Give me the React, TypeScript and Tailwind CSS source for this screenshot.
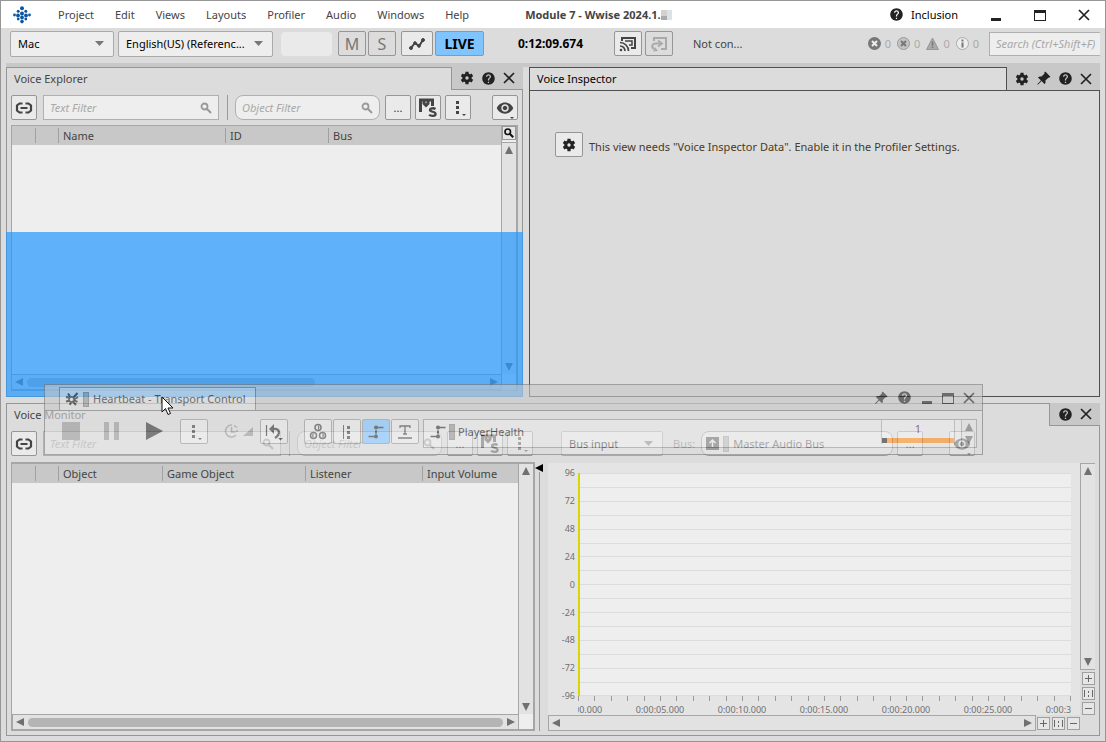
import type { ReactNode } from "react";
import clsx from "clsx";
import { BsPinAngleFill } from "react-icons/bs";
import { MdHelp, MdVisibility } from "react-icons/md";

const MENUS = ["Project", "Edit", "Views", "Layouts", "Profiler", "Audio", "Windows", "Help"];

/* ---------- icons ---------- */

function Logo() {
  const dots = [
    [9, 2.2, 2], [5.2, 5.2, 1.5], [12.8, 5.2, 1.5], [1.5, 9, 1.4], [5, 9.4, 1.9], [9, 7.5, 2],
    [13, 9.4, 1.9], [16.5, 9, 1.4], [5.2, 13, 1.4], [9, 11.5, 1.9], [12.8, 13, 1.4], [9, 15.6, 1.8],
  ];
  return (
    <svg width="18" height="18" viewBox="0 0 18 18" fill="#0b57a0">
      {dots.map(([x, y, r], i) => <circle key={i} cx={x} cy={y} r={r} />)}
    </svg>
  );
}

function Gear() {
  return (
    <svg width="14" height="14" viewBox="0 0 14 14" fill="none" stroke="#222">
      <circle cx="7" cy="7" r="3.200" strokeWidth="3" />
      <path d="M7 .8v2.400M7 10.800v2.400M1.600 3.900l2.100 1.200M10.300 8.900l2.100 1.200M1.600 10.100l2.100-1.200M10.300 5.100l2.100-1.200" strokeWidth="3.200" />
    </svg>
  );
}

function Cross({ size = 12 }: { size?: number }) {
  return (
    <svg width={size} height={size} viewBox="0 0 12 12" stroke="currentColor" strokeWidth="1.7">
      <path d="M1 1l10 10M11 1L1 11" />
    </svg>
  );
}

function Minimize() {
  return <svg width="12" height="12" viewBox="0 0 12 12" fill="currentColor"><path d="M1 9h10v3H1z" /></svg>;
}

function Maximize() {
  return (
    <svg width="12" height="12" viewBox="0 0 12 12" fill="currentColor">
      <path d="M0 1h12v11H0zM1 4v7h10V4z" fillRule="evenodd" />
    </svg>
  );
}

function Magnifier() {
  return (
    <svg className="shrink-0" width="12" height="12" viewBox="0 0 12 12" fill="none" stroke="#999">
      <circle cx="4.500" cy="4.500" r="3" strokeWidth="1.800" />
      <path d="M6.800 6.800l4.200 4.200" strokeWidth="2" />
    </svg>
  );
}

function ChainLink() {
  return (
    <svg width="18" height="12" viewBox="0 0 18 12" fill="none" stroke="#444" strokeWidth="2.200">
      <path d="M7.500 1.500H4.500L2 3.500v5l2.500 2h3M10.500 1.500h3l2.500 2v5l-2.500 2h-3" />
      <path d="M5.500 6h7" strokeWidth="2" />
    </svg>
  );
}

function MuteSolo() {
  return (
    <svg width="20" height="20" viewBox="0 0 20 20" fill="none" stroke="#444">
      <path d="M2.500 14V2h12v6M6 2v3.500l2 2 2-2V2" strokeWidth="3" />
      <path d="M17.500 11c-1.500-1-5.500-1.200-5.500 1s5.600 1.300 5.600 3.900-5 2.300-6.500.8" strokeWidth="2.300" />
    </svg>
  );
}

function MoreDots() {
  return (
    <svg width="18" height="18" viewBox="0 0 18 18" fill="#444">
      <path d="M7 2h3v3H7zM7 7h3v3H7zM7 12h3v3H7zM13 15h4l-2 2z" />
    </svg>
  );
}

function Eye() {
  return (
    <span className="relative flex text-[#444]">
      <MdVisibility size={18} />
      <svg className="absolute -bottom-0.5 right-0" width="4" height="2" fill="#444"><path d="M0 0h4L2 2z" /></svg>
    </span>
  );
}

function Graph() {
  return (
    <svg width="18" height="14" viewBox="0 0 18 14" fill="#444" stroke="#444">
      <path d="M3 11l4-5 4 3 4-6" fill="none" strokeWidth="2" />
      <circle cx="3" cy="11" r="1.500" /><circle cx="7" cy="6" r="1.300" />
      <circle cx="11" cy="9" r="1.300" /><circle cx="15" cy="3" r="1.500" />
    </svg>
  );
}

function RemoteCast() {
  return (
    <svg width="18" height="16" viewBox="0 0 18 16" fill="none" stroke="#444">
      <path d="M3 5V2h13v10h-4" strokeWidth="2" />
      <path d="M6 5h7v4h-3" strokeWidth="1.500" />
      <path d="M1 6.500a8.500 8.500 0 0 1 8.500 8.500M1 10a5 5 0 0 1 5 5" strokeWidth="1.700" />
      <circle cx="2" cy="14" r="1.300" fill="#444" stroke="none" />
    </svg>
  );
}

function Reconnect() {
  return (
    <svg width="18" height="16" viewBox="0 0 18 16" fill="none" stroke="#aaa">
      <path d="M4 5V2h12v11h-5" strokeWidth="2" />
      <path d="M8 4.500l4 3-4 3" strokeWidth="1.800" />
      <path d="M11 7.500H6C2 7.500 1 11 4 13" strokeWidth="2" />
      <path d="M3 15.500l5-.5-3-4z" fill="#aaa" stroke="none" />
    </svg>
  );
}

function Triangle({ dir, size = 8 }: { dir: "up" | "down" | "left" | "right"; size?: number }) {
  const d = { up: "M4 0l4 8H0z", down: "M0 0h8L4 8z", left: "M8 0v8L0 4z", right: "M0 0l8 4-8 4z" }[dir];
  return <svg className="shrink-0" width={size} height={size} viewBox="0 0 8 8" fill="currentColor"><path d={d} /></svg>;
}

function GameParam() {
  return (
    <svg width="16" height="14" viewBox="0 0 16 14" fill="#333" stroke="#333">
      <path d="M.5 11.500H8M8 2.500h7.500" strokeWidth="1.500" />
      <path d="M8 2v9" strokeWidth="1" strokeDasharray="2 1" />
      <circle cx="8" cy="2.500" r="2" stroke="none" />
      <circle cx="8" cy="7" r="1.200" stroke="none" />
      <circle cx="8" cy="11.500" r="2" stroke="none" />
    </svg>
  );
}

/* ---------- controls ---------- */

function ToolButton({ label, className, children }: { label: string; className?: string; children: ReactNode }) {
  return (
    <button
      aria-label={label}
      className={clsx(
        "flex shrink-0 items-center justify-center rounded-xs border border-[#969696] text-[#333]",
        className ?? "h-[25px] w-[26px] bg-[#eaeaea]"
      )}
    >
      {children}
    </button>
  );
}

function Filter({ label, className }: { label: string; className: string }) {
  return (
    <label className={clsx("flex h-[25px] items-center border border-[#b0b0b0] bg-[#eee] px-1.5", className)}>
      <input aria-label={label} placeholder={label} className="w-full min-w-0 italic outline-none placeholder:text-[#a8a8a8]" />
      <Magnifier />
    </label>
  );
}

function Dropdown({ label, value, className }: { label: string; value: string; className: string }) {
  return (
    <div className={clsx("relative flex shrink-0 items-center", className)}>
      <select aria-label={label} className="h-full w-full appearance-none rounded-xs border border-[#aaa] bg-[#eee] pl-[7px] text-black">
        <option>{value}</option>
      </select>
      <svg className="pointer-events-none absolute right-2.5" width="9" height="5" fill="#777"><path d="M0 0h9L4.500 5z" /></svg>
    </div>
  );
}

function Counter({ children }: { children: ReactNode }) {
  return <span className="flex items-center gap-1 text-[#aaa]">{children}0</span>;
}

function HScroll({ thumb, className }: { thumb: string; className?: string }) {
  return (
    <div className={clsx("flex h-4 items-center gap-1 border border-[#a6a6a6] bg-[#e2e2e2] px-[3px] text-[#707070]", className)}>
      <Triangle dir="left" />
      <div className="flex flex-1"><div className={clsx("h-[9px] rounded-full bg-[#b4b4b4]", thumb)} /></div>
      <Triangle dir="right" />
    </div>
  );
}

function VScroll({ className }: { className?: string }) {
  return (
    <div className={clsx("flex flex-col items-center justify-between border-[#a6a6a6] bg-[#e2e2e2] py-[3px] text-[#707070]", className)}>
      <Triangle dir="up" />
      <Triangle dir="down" />
    </div>
  );
}

function ZoomButtons({ className }: { className: string }) {
  const paths = ["M2 5.500h7M5.500 2v7", "M1.500 2v7M9.500 2v7M5.500 3v2M5.500 7v2", "M2 5.500h7"];
  return (
    <div className={clsx("flex", className)}>
      {paths.map((d, i) => (
        <button key={i} aria-label={["Zoom in", "Reset zoom", "Zoom out"][i]} className="flex size-[13px] border border-[#a0a0a0] bg-[#e6e6e6]">
          <svg width="11" height="11" stroke="#666"><path d={d} /></svg>
        </button>
      ))}
    </div>
  );
}

function Columns({ cols }: { cols: { name: string; width: string }[] }) {
  return (
    <table className="w-full table-fixed bg-[#c8c8c8]">
      <thead>
        <tr className="h-[19px]">
          {cols.map((c, i) => (
            <th key={i} className={clsx("truncate p-0 text-left font-normal", c.width)}>
              <div className={clsx("h-[15px] leading-[15px]", i > 0 && "border-l border-[#a0a0a0] pl-1")}>{c.name}</div>
            </th>
          ))}
        </tr>
      </thead>
    </table>
  );
}

/* ---------- panels ---------- */

function Panel({ title, tools, dark, children }: { title: string; tools: ReactNode; dark?: boolean; children: ReactNode }) {
  const edge = dark ? "border-[#505050]" : "border-[#969696]";
  return (
    <section className="relative flex min-w-0 flex-col bg-[#dcdcdc]">
      <header className="flex h-[23px] bg-[#c8c8c8]">
        <h2 className={clsx("flex flex-1 items-center border-t border-r border-l bg-[#dcdcdc] pl-[7px]", edge, dark && "text-black")}>
          {title}
        </h2>
        <div className={clsx("flex items-center gap-[7px] px-2 text-[#222]", edge, !dark && "border-b")}>{tools}</div>
      </header>
      <div className={clsx("flex flex-1 flex-col border-r border-b border-l", edge, dark && "border-t")}>{children}</div>
    </section>
  );
}

function VoiceExplorer() {
  return (
    <Panel title="Voice Explorer" tools={<><Gear /><MdHelp size={15} /><Cross /></>}>
      <div className="flex px-1 pt-[5px] pb-[5px]">
        <ToolButton label="Link view"><ChainLink /></ToolButton>
        <Filter label="Text Filter" className="ml-1.5 flex-1" />
        <div className="ml-2 w-px bg-[#999]" />
        <Filter label="Object Filter" className="ml-[7px] w-[145px] rounded-lg" />
        <div className="ml-[5px] flex gap-1">
          <ToolButton label="Browse">...</ToolButton>
          <ToolButton label="Mute and solo"><MuteSolo /></ToolButton>
          <ToolButton label="More"><MoreDots /></ToolButton>
        </div>
        <div className="ml-[21px]"><ToolButton label="Visibility"><Eye /></ToolButton></div>
      </div>
      <div className="mx-1 mb-[5px] flex flex-1 flex-col border border-r-2 border-[#a6a6a6] bg-[#eee]">
        <div className="flex flex-1">
          <div className="min-w-0 flex-1">
            <Columns
              cols={[
                { name: "", width: "w-[23px]" },
                { name: "", width: "w-[23px]" },
                { name: "Name", width: "w-[167px]" },
                { name: "ID", width: "w-[103px]" },
                { name: "Bus", width: "" },
              ]}
            />
          </div>
          <div className="flex w-[15px] flex-col gap-0.5 border-l border-[#a6a6a6]">
            <button aria-label="Search list" className="flex size-[14px] items-center justify-center border border-[#999] bg-[#e6e6e6]">
              <svg width="10" height="10" viewBox="0 0 12 12" fill="none" stroke="#111">
                <circle cx="4.500" cy="4.500" r="3.300" strokeWidth="2" /><path d="M7 7l4 4" strokeWidth="2.500" />
              </svg>
            </button>
            <VScroll className="flex-1 border-t" />
          </div>
        </div>
        <HScroll thumb="w-[288px]" className="mr-[14px] -ml-px" />
      </div>
      <div className="absolute bottom-0 left-0 h-1/2 w-full bg-[#2299ff]/70" />
    </Panel>
  );
}

function VoiceInspector() {
  return (
    <Panel
      dark
      title="Voice Inspector"
      tools={<><Gear /><BsPinAngleFill size={15} /><MdHelp size={15} /><Cross /></>}
    >
      <div className="flex items-center gap-1.5 px-[25px] py-[41px] text-[#4a3a20]">
        <ToolButton label="Profiler settings" className="h-[25px] w-7 bg-[#eaeaea]"><Gear /></ToolButton>
        <p className="pt-1">This view needs "Voice Inspector Data". Enable it in the Profiler Settings.</p>
      </div>
    </Panel>
  );
}

function VoiceGraph() {
  const rows = Array.from({ length: 17 }, (_, i) => i);
  const ticks = Array.from({ length: 31 }, (_, i) => i);
  return (
    <svg className="h-[251px] w-full text-[9px]" fill="#707070">
      <svg x="30" y="10" width="493" height="241">
        <rect width="100%" height="223" fill="#eee" />
        {rows.map((i) => (
          <rect key={i} y={Math.round(i * 13.9)} width="100%" height="1" fill="#dcdcdc" />
        ))}
        <rect width="2" height="223" fill="#d8d800" />
        {ticks.map((i) => (
          <rect key={i} x={Math.round(i * 16.4)} y="223" width="1" height="5" fill="#999" />
        ))}
        {[0, 5, 10, 15, 20, 25, 30].map((s) => (
          <text key={s} x={s * 16.4} y="240" textAnchor="middle">{`0:00:${String(s).padStart(2, "0")}.000`}</text>
        ))}
      </svg>
      {[96, 72, 48, 24, 0, -24, -48, -72, -96].map((v, i) => (
        <text key={v} x="27" y={13 + Math.round(i * 27.9)} textAnchor="end">{v}</text>
      ))}
    </svg>
  );
}

function VoiceMonitor() {
  return (
    <Panel title="Voice Monitor" tools={<><MdHelp size={15} /><Cross /></>}>
      <div className="flex px-1 pt-[5px] pb-1.5">
        <ToolButton label="Link view"><ChainLink /></ToolButton>
        <Filter label="Text Filter" className="ml-1.5 w-[238px]" />
        <div className="ml-2 w-px bg-[#999]" />
        <Filter label="Object Filter" className="ml-[7px] w-[145px] rounded-lg" />
        <div className="ml-[5px] flex gap-1">
          <ToolButton label="Browse">...</ToolButton>
          <ToolButton label="Mute and solo"><MuteSolo /></ToolButton>
          <ToolButton label="More"><MoreDots /></ToolButton>
        </div>
        <Dropdown label="Graph type" value="Bus input" className="ml-7 w-[102px]" />
        <div className="ml-2.5 flex items-center text-[#777]">Bus:</div>
        <button className="ml-1.5 flex w-[192px] items-center gap-1 rounded-lg border border-[#999] bg-[#eee] pl-1 text-left">
          <svg width="13" height="13" fill="#444"><path d="M0 0h13v13H0z" /><path d="M6.500 3v7M3.500 6l3-3 3 3" fill="none" stroke="#eee" strokeWidth="1.500" /></svg>
          <span className="h-4 w-1.5 border border-[#999] bg-[#b0b0b0]" />
          Master Audio Bus
        </button>
        <div className="ml-1 flex gap-[26px]">
          <ToolButton label="Browse bus">...</ToolButton>
          <ToolButton label="Visibility"><Eye /></ToolButton>
        </div>
      </div>
      <div className="flex flex-1 px-1 pb-1">
        <div className="flex w-[524px] shrink-0 flex-col border-2 border-l border-[#a6a6a6] bg-[#eee]">
          <div className="flex flex-1">
            <div className="min-w-0 flex-1">
              <Columns
                cols={[
                  { name: "", width: "w-[23px]" },
                  { name: "", width: "w-[23px]" },
                  { name: "Object", width: "w-[104px]" },
                  { name: "Game Object", width: "w-[143px]" },
                  { name: "Listener", width: "w-[117px]" },
                  { name: "Input Volume", width: "" },
                ]}
              />
            </div>
            <VScroll className="w-[15px] border-l" />
          </div>
          <HScroll thumb="w-full" className="mr-[14px] -mb-px" />
        </div>
        <div className="flex w-[13px] flex-col items-start pt-0.5 text-black">
          <Triangle dir="left" />
          <div className="ml-1 w-px flex-1 bg-[#999]" />
        </div>
        <div className="flex min-w-0 flex-1 flex-col pt-px">
          <div className="flex flex-1">
            <div className="min-w-0 flex-1 bg-[#e4e4e4]"><VoiceGraph /></div>
            <div className="flex w-[15px] flex-col items-end gap-0.5">
              <VScroll className="w-[15px] flex-1 border-t border-b border-l" />
              <ZoomButtons className="flex-col gap-0.5" />
            </div>
          </div>
          <div className="flex items-center gap-px pr-[15px]">
            <HScroll thumb="hidden" className="flex-1" />
            <ZoomButtons className="gap-0.5" />
          </div>
        </div>
      </div>
    </Panel>
  );
}

/* Floating view that is being dragged over the docked panels */
function TransportControl() {
  const btn = "h-[25px] w-7 bg-[#eaeaea]";
  return (
    <section className="absolute top-[383px] left-[43px] flex h-[71px] w-[939px] flex-col border border-[#777] bg-[#dcdcdc] text-[#222] opacity-60">
      <header className="flex h-[26px] items-end border-b border-[#777] bg-[#c8c8c8] pl-3.5">
        <h2 className="flex h-[23px] w-[197px] items-center gap-1 border border-b-0 border-[#777] bg-[#dcdcdc] pl-[5px]">
          <svg width="14" height="14" viewBox="0 0 14 14" fill="none" stroke="#222">
            <path d="M3 1.500l2 3M1 5l4 1M1 9.500l4-1M5 13l1-3M12.500 1L8 6M13 5l-4 2.500M11 13L7.500 9M12.500 10L9 8" strokeWidth="2" />
            <circle cx="6.500" cy="7.500" r="2.500" strokeWidth="1.500" />
          </svg>
          <span className="h-[15px] w-1.5 border border-[#777] bg-[#999]" />
          <span>Heartbeat - Transport Control</span>
        </h2>
        <div className="ml-auto flex h-full items-center gap-[9px] pr-[7px]">
          <BsPinAngleFill size={14} /><MdHelp size={15} /><Minimize /><Maximize /><Cross />
        </div>
      </header>
      <div className="flex px-[5px] pt-2">
        <div className="flex h-6 w-[130px] items-center pl-3">
          <svg width="103" height="18">
            <path d="M0 0h18v18H0zM42 0h5v18h-5zM52 0h5v18h-5z" fill="#999" />
            <path d="M84 0l17 9-17 9z" fill="#333" />
          </svg>
        </div>
        <ToolButton label="More" className={btn}><MoreDots /></ToolButton>
        <svg className="mx-4 mt-1" width="30" height="16" fill="none" stroke="#999" strokeWidth="1.800">
          <path d="M8 2a6 6 0 1 0 4 10M7.500 4v5h4" strokeWidth="1.500" />
          <path d="M10 2.500l3 2M13 7v2" strokeWidth="1.500" />
          <path d="M29 4v9h-10z" fill="#999" stroke="none" />
        </svg>
        <div className="-ml-2.5 flex">
          <ToolButton label="Reset" className={btn}>
            <svg width="18" height="18" fill="none" stroke="#333" strokeWidth="2.200">
              <path d="M1.500 2v11" strokeWidth="1.200" /><path d="M8 6c7-1 8 5 2 9" /><path d="M4 6l5-5v10z" fill="#333" stroke="none" />
              <path d="M13 15h5l-2.500 2.500z" fill="#333" stroke="none" />
            </svg>
          </ToolButton>
        </div>
        <div className="ml-4 flex gap-px">
          <ToolButton label="States" className={btn}>
            <svg width="18" height="18" fill="none" stroke="#444" strokeWidth="1.500">
              <circle cx="9" cy="4.500" r="3" /><circle cx="4.500" cy="12.500" r="3" /><circle cx="13.500" cy="12.500" r="3" />
              <path d="M9 2a3 3 0 0 1 0 5zM4.500 10a3 3 0 0 0 0 5zM13.500 10a3 3 0 0 1 0 5z" fill="#444" stroke="none" />
            </svg>
          </ToolButton>
          <ToolButton label="Switches" className={btn}>
            <svg width="16" height="16" fill="#444"><path d="M4 1h1v14H4zM8 2h3v3H8zM8 7h3v3H8zM8 12h3v3H8z" /></svg>
          </ToolButton>
          <ToolButton label="RTPCs" className="h-[25px] w-7 bg-[#80c4ff]"><GameParam /></ToolButton>
          <ToolButton label="Triggers" className={btn}>
            <svg width="16" height="16" fill="none" stroke="#444" strokeWidth="1.300"><path d="M3 4V2h10v2M8 2v8M6 10h4M1 14h14" /></svg>
          </ToolButton>
        </div>
        <div className="ml-1 flex h-[29px] flex-1 items-start border border-[#969696] bg-[#eaeaea] pl-1.5">
          <div className="flex flex-1 items-center gap-[3px] pt-1">
            <GameParam />
            <span className="h-4 w-1.5 border border-[#888] bg-[#999]" />
            PlayerHealth
          </div>
          <div className="h-6 w-[74px] border-x border-[#aaa] bg-[#eee]">
            <div className="flex h-[18px] items-center justify-center text-[#60104a]">1</div>
            <div className="flex h-[5px] bg-[#ff9020]"><div className="w-[5px] bg-[#222]" /></div>
          </div>
          <VScroll className="ml-1.5 h-[27px] w-[15px] border-l" />
        </div>
      </div>
    </section>
  );
}

export default function App() {
  return (
    <div className="relative flex min-h-screen flex-col border border-[#969696] bg-[#dcdcdc] font-['Noto_Sans',sans-serif] text-[11px] leading-4 text-[#444]">
      <header className="flex h-[27px] items-center bg-white pl-3">
        <Logo />
        <nav className="ml-[27px] flex gap-[21px]">
          {MENUS.map((m) => <button key={m}>{m}</button>)}
        </nav>
        <h1 className="ml-14 font-bold">Module 7 - Wwise 2024.1.</h1>
        <svg width="11" height="10"><path d="M0 0h6v6H0z" fill="#d6d0cc" /><path d="M0 6h6v4H0z" fill="#aaa" /><path d="M6 0h5v10H6z" fill="#dce2ea" /></svg>
        <div className="ml-auto flex items-center text-[#222]">
          <MdHelp size={15} />
          <span className="ml-[7px] text-black">Inclusion</span>
          <div className="ml-8 flex gap-8 pr-[15px]"><Minimize /><Maximize /><Cross /></div>
        </div>
      </header>

      <div className="flex h-[35px] items-center pr-[5px] pb-1 pl-[9px]">
        <Dropdown label="Platform" value="Mac" className="h-[26px] w-[104px]" />
        <Dropdown label="Language" value="English(US) (Referenc..." className="ml-1 h-[26px] w-[155px]" />
        <div className="ml-2 h-6 w-[51px] rounded-sm bg-[#eaeaea]" />
        <div className="ml-1.5 flex gap-0.5 text-base">
          <ToolButton label="Mute" className="h-[25px] w-7 bg-[#dcdcdc]"><span className="text-[#777]">M</span></ToolButton>
          <ToolButton label="Solo" className="h-[25px] w-7 bg-[#dcdcdc]"><span className="text-[#777]">S</span></ToolButton>
        </div>
        <div className="ml-[5px] flex gap-0.5">
          <ToolButton label="Profile" className="h-[25px] w-8 bg-[#eaeaea]"><Graph /></ToolButton>
          <ToolButton label="Live" className="h-[25px] w-[49px] bg-[#80c4ff]"><b className="text-sm text-black">LIVE</b></ToolButton>
        </div>
        <time className="ml-[34px] w-24 text-xs font-bold text-black">0:12:09.674</time>
        <div className="flex gap-[3px]">
          <ToolButton label="Remote" className="h-[25px] w-7 bg-[#eaeaea]"><RemoteCast /></ToolButton>
          <ToolButton label="Reconnect" className="h-[25px] w-7 bg-[#dcdcdc]"><Reconnect /></ToolButton>
        </div>
        <span className="ml-5">Not con...</span>
        <div className="ml-auto flex gap-1.5 pr-2.5">
          <Counter>
            <svg width="13" height="13"><circle cx="6.500" cy="6.500" r="6.500" fill="#777" /><path d="M4 4l5 5M9 4L4 9" stroke="#eee" strokeWidth="2" /></svg>
          </Counter>
          <Counter>
            <svg width="13" height="13"><circle cx="6.500" cy="6.500" r="6" fill="#c4c4c4" stroke="#999" /><path d="M4 4l5 5M9 4L4 9" stroke="#777" strokeWidth="2" /></svg>
          </Counter>
          <Counter>
            <svg width="13" height="13"><path d="M6.500 1l6 11.500H.5z" fill="#aaa" stroke="#999" /><path d="M6.500 4.500v4M6.500 9.500v1.500" stroke="#777" strokeWidth="1.500" /></svg>
          </Counter>
          <Counter>
            <svg width="13" height="13"><circle cx="6.500" cy="6.500" r="6" fill="#eee" stroke="#aaa" /><path d="M6.500 2.500v2M6.500 5.500v5" stroke="#777" strokeWidth="2" /></svg>
          </Counter>
        </div>
        <input
          aria-label="Search"
          placeholder="Search (Ctrl+Shift+F)"
          className="h-6 w-[111px] border border-r-0 border-[#b0b0b0] bg-[#eee] pl-1.5 italic outline-none placeholder:text-[#a8a8a8]"
        />
      </div>

      <main className="flex flex-1 flex-col gap-1.5 px-[5px] pb-[5px]">
        <div className="grid flex-[334_1_0px] grid-cols-[517fr_571fr] grid-rows-[auto_1fr] gap-x-1.5">
          <div className="col-span-2 h-1 bg-[#c8c8c8]" />
          <VoiceExplorer />
          <VoiceInspector />
        </div>
        <div className="grid flex-[333_1_0px]"><VoiceMonitor /></div>
      </main>

      <TransportControl />
      <svg className="pointer-events-none absolute top-[395px] left-[160px]" width="13" height="20" fill="#fff" stroke="#111">
        <path d="M1 1v15l3.500-3.500L7 18.500l2.500-1-2.500-5.500h5z" />
      </svg>
    </div>
  );
}
